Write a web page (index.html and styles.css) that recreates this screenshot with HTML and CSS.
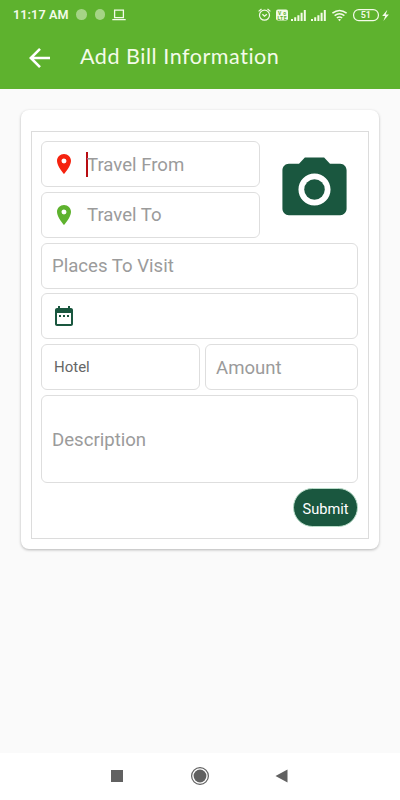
FILE: index.html
```html
<!DOCTYPE html>
<html lang="en">
<head>
<meta charset="utf-8">
<title>Add Bill Information</title>
<link rel="stylesheet" href="styles.css">
</head>
<body>
<header class="header">
  <div class="status">
    <span class="time">11:17 AM</span>
    <i class="dot"></i><i class="dot"></i>
    <svg class="laptop" width="14" height="12" viewBox="0 0 14 12"><path d="M2.6 1.2h8.8v7.4H2.6zM.3 10.6h13.4" fill="none" stroke="currentColor" stroke-width="1.3"/></svg>
    <svg class="tray" width="134" height="16" viewBox="0 0 134 16">
      <g fill="none" stroke="currentColor" stroke-width="1.2">
        <circle cx="6.5" cy="8.2" r="5"/><path d="M4.4 7.2l2.1 2 2.3-2M.6 4.4L3.5 2M12.4 4.4L9.5 2"/>
        <path d="M74.4 6.2q7.1-5.4 14.2 0M76.6 8.7q4.9-3.8 9.8 0M78.8 11q2.7-2 5.4 0" stroke-width="1.5"/>
        <rect x="95.6" y="2.6" width="24.8" height="11" rx="5.2"/>
      </g>
      <rect x="18" y="2.6" width="12" height="11" rx="2" fill="currentColor"/>
      <text class="lte" x="24" y="7.8" textLength="8">Vo</text>
      <text class="lte" x="24" y="12.6" textLength="9">LTE</text>
      <path fill="currentColor" d="M33 12h2v2h-2zM36.2 10.3h2V14h-2zM39.4 8.2h2V14h-2zM42.6 5.8h2V14h-2zM45.8 3h2v11h-2zM53 12h2v2h-2zM56.2 10.3h2V14h-2zM59.4 8.2h2V14h-2zM62.6 5.8h2V14h-2zM65.8 3h2v11h-2zM80 12.6q1.5-1.2 3 0L81.5 14.2zM129.4 2.7l-5.2 6.4h3l-1.8 4.8 5.5-6.4h-3.2z"/>
      <text class="level" x="107.8" y="11.3">51</text>
    </svg>
  </div>
  <div class="bar">
    <svg class="back" width="22" height="22" viewBox="0 0 22 22"><path d="M21 11H2M11 1.8L1.8 11l9.2 9.2" fill="none" stroke="currentColor" stroke-width="2.6"/></svg>
    <h1 class="title">Add Bill Information</h1>
  </div>
</header>
<main class="content">
  <section class="card">
    <form class="form">
      <div class="row">
        <div class="places">
          <div class="field">
            <svg class="icon red" viewBox="0 0 24 24"><path d="M12 2C8.13 2 5 5.13 5 9c0 5.25 7 13 7 13s7-7.75 7-13c0-3.87-3.13-7-7-7zm0 9.5a2.5 2.5 0 0 1 0-5 2.5 2.5 0 0 1 0 5z"/></svg>
            <span class="hint focus">Travel From</span>
          </div>
          <div class="field">
            <svg class="icon green" viewBox="0 0 24 24"><path d="M12 2C8.13 2 5 5.13 5 9c0 5.25 7 13 7 13s7-7.75 7-13c0-3.87-3.13-7-7-7zm0 9.5a2.5 2.5 0 0 1 0-5 2.5 2.5 0 0 1 0 5z"/></svg>
            <span class="hint">Travel To</span>
          </div>
        </div>
        <svg class="camera" viewBox="0 0 24 24"><circle cx="12" cy="12" r="3.2"/><path d="M9 2L7.17 4H4c-1.1 0-2 .9-2 2v12c0 1.1.9 2 2 2h16c1.1 0 2-.9 2-2V6c0-1.1-.9-2-2-2h-3.17L15 2H9zm3 15c-2.76 0-5-2.24-5-5s2.24-5 5-5 5 2.24 5 5-2.24 5-5 5z"/></svg>
      </div>
      <div class="field"><span class="hint">Places To Visit</span></div>
      <div class="field">
        <svg class="icon dark" viewBox="0 0 24 24"><path d="M9 11H7v2h2v-2zm4 0h-2v2h2v-2zm4 0h-2v2h2v-2zm2-7h-1V2h-2v2H8V2H6v2H5c-1.11 0-1.99.9-1.99 2L3 20c0 1.1.89 2 2 2h14c1.1 0 2-.9 2-2V6c0-1.1-.9-2-2-2zm0 16H5V9h14v11z"/></svg>
      </div>
      <div class="pair">
        <div class="field"><span class="value">Hotel</span></div>
        <div class="field"><span class="hint">Amount</span></div>
      </div>
      <div class="field tall"><span class="hint">Description</span></div>
      <button class="submit" type="button">Submit</button>
    </form>
  </section>
</main>
<nav class="nav">
  <svg width="400" height="47" viewBox="0 0 400 47" fill="#616161">
    <path d="M111 17h12v12h-12zM287.5 16.5v13L275.5 23z"/>
    <circle cx="200" cy="23" r="6.4"/><circle cx="200" cy="23" r="8.4" fill="none" stroke="#616161" stroke-width="1.2"/>
  </svg>
</nav>
</body>
</html>
```
FILE: styles.css
```css
* { box-sizing: border-box; }
body {
  margin: 0;
  height: 800px;
  display: flex;
  flex-direction: column;
  overflow: hidden;
  background: #fafafa;
  font-family: Roboto, sans-serif;
}
.header { height: 89px; background: #5eb22e; color: #f4fbe9; }
.status { height: 28px; padding: 1px 8px 0 13px; display: flex; align-items: center; }
.time { width: 56px; margin-right: 7px; font-size: 12.6px; font-weight: 600; letter-spacing: .1px; white-space: nowrap; }
.dot { width: 10.5px; height: 10.5px; margin-right: 8px; border-radius: 50%; background: #a5d486; }
.laptop { margin-left: -1.5px; }
.tray { margin-left: auto; }
.lte { font-size: 5px; font-weight: 700; fill: #5eb22e; text-anchor: middle; }
.level { font-size: 9px; font-weight: 600; fill: currentColor; text-anchor: middle; }
.bar { height: 60px; padding-left: 29px; display: flex; align-items: center; }
.back { color: #fff; }
.title { margin: -4px 0 0 29px; font: 400 21.5px/30px Lato, sans-serif; letter-spacing: .54px; white-space: nowrap; }
.content { flex: 1; padding: 21px 21px 0; }
.card {
  height: 439px;
  padding: 21px 10px 10px;
  border-radius: 8px;
  background: #fff;
  box-shadow: 0 1px 3px rgba(0, 0, 0, .28);
}
.form {
  height: 408px;
  padding: 9px 10px 0 9px;
  border: 1px solid #dcdcdc;
  display: flex;
  flex-direction: column;
  gap: 4.75px;
}
.row { height: 96.75px; display: flex; }
.places { width: 219px; display: flex; flex-direction: column; gap: 4.75px; }
.field {
  height: 46px;
  padding: 0 10px;
  display: flex;
  align-items: center;
  border: 1px solid #dedede;
  border-radius: 6px;
  background: #fff;
}
.tall { height: 88.6px; }
.icon { width: 24px; height: 24px; margin-right: 11px; }
.red { fill: #f5230f; }
.green { fill: #5eb22e; }
.dark { fill: #1a573f; }
.camera { width: 77px; height: 77px; margin: 10px 0 0 16px; fill: #1a573f; }
.hint { padding-top: 1px; color: #9b9b9b; font-size: 18.6px; line-height: 24px; }
.focus { box-shadow: -1px 0 #b80d12, inset 1px 0 #b80d12; }
.value { padding-left: 2px; color: #666; font-size: 15px; }
.pair { display: grid; grid-template-columns: 159px 1fr; gap: 5px; }
.submit {
  align-self: flex-end;
  width: 65px;
  height: 39px;
  padding: 2px 0 0;
  border: 1px solid #b9dcc9;
  border-radius: 20px;
  background: #1a573f;
  color: #fff;
  font: 400 14.6px Roboto, sans-serif;
}
.nav { height: 47px; background: #fff; }
.nav svg { display: block; }
```
